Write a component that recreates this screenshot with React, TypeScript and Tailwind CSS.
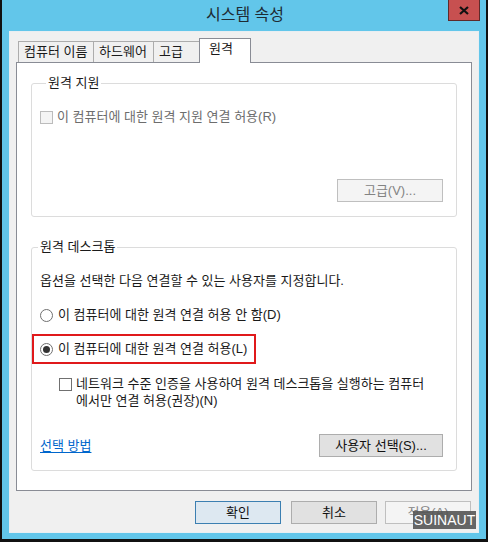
import React from 'react';

const font = "font-['Liberation_Sans','Noto_Sans_CJK_KR',sans-serif]";

function CheckBox({ disabled }: { disabled?: boolean }) {
  return (
    <span
      className={`inline-block w-[13px] h-[13px] shrink-0 border ${
        disabled ? 'border-[#bcbcbc] bg-[#f4f4f4]' : 'border-[#707070] bg-white'
      }`}
    />
  );
}

function Radio({ checked }: { checked?: boolean }) {
  return (
    <span className="inline-flex items-center justify-center w-[13px] h-[13px] shrink-0 rounded-full border border-[#707070] bg-white">
      {checked && <span className="w-[7px] h-[7px] rounded-full bg-[#333]" />}
    </span>
  );
}

function Btn({
  children,
  variant = 'normal',
  className = '',
}: {
  children: React.ReactNode;
  variant?: 'normal' | 'default' | 'disabled';
  className?: string;
}) {
  const look =
    variant === 'default'
      ? 'border-[#3c7fb1] bg-[#dde8f1] text-[#111]'
      : variant === 'disabled'
        ? 'border-[#bfbfbf] bg-[#f4f4f4] text-[#838383]'
        : 'border-[#adadad] bg-[#e1e1e1] text-[#111]';
  return (
    <div className={`h-[23px] flex items-center justify-center border text-[13px] ${look} ${className}`}>
      {children}
    </div>
  );
}

function Tab({ label, active, w }: { label: string; active?: boolean; w: string }) {
  if (active) {
    return (
      <div className={`${w} h-[25px] -mb-[1px] relative z-10 border border-b-0 border-[#898c95] bg-white pl-[9px] pt-[2px] text-[13px] leading-[16px]`}>
        {label}
      </div>
    );
  }
  return (
    <div className={`${w} h-[21px] mt-[3px] border border-b-0 border-[#acacac] bg-[#f0f0f0] -mr-[1px] pl-[5px] pt-[2px] text-[13px] leading-[16px]`}>
      {label}
    </div>
  );
}

export default function App() {
  return (
    <div className={`w-[488px] h-[542px] bg-[#62c6ea] border-l-2 border-r-2 border-b-[3px] border-[#111] flex flex-col text-[#1a1a1a] ${font}`}>
      {/* title bar */}
      <div className="h-[31px] relative flex items-center justify-center">
        <span className="text-[16px] leading-[20px] text-[#1e2b33] -mt-[2px] ml-[2px]">시스템 속성</span>
        <div className="absolute right-[6px] top-0 w-[32px] h-[21px] bg-[#c75050] border border-t-0 border-[#5e2a2a] flex items-center justify-center">
          <svg width="10" height="9" viewBox="0 0 10 9">
            <path d="M1 1 L9 8 M9 1 L1 8" stroke="#111" strokeWidth="2.2" />
          </svg>
        </div>
      </div>

      {/* client area */}
      <div className="mx-[7px] h-[502px] bg-[#f0f0f0] border border-[#e8eef2] relative flex flex-col px-[6px]">
        {/* tabs */}
        <div className="flex items-start pl-[2px] mt-[6px] h-[24px]">
          <Tab label="컴퓨터 이름" w="w-[76px]" />
          <Tab label="하드웨어" w="w-[61px]" />
          <Tab label="고급" w="w-[47px]" />
          <Tab label="원격" w="w-[52px]" active />
        </div>

        {/* tab panel */}
        <div className="h-[429px] border border-[#898c95] bg-white px-[14px] pt-[12px]">
          <fieldset className="border border-[#dcdcdc] rounded-[3px] px-[8px] pb-[14px]">
            <legend className="ml-[6px] px-[2px] text-[13px] leading-[16px]">원격 지원</legend>
            <div className="flex items-center h-[16px] mt-[18px] gap-[4px]">
              <CheckBox disabled />
              <span className="text-[13px] leading-[16px] text-[#6d6d6d]">이 컴퓨터에 대한 원격 지원 연결 허용(R)</span>
            </div>
            <div className="flex justify-end mt-[54px] pr-[5px]">
              <Btn variant="disabled" className="w-[106px] border-[#adadad] text-[#6d6d6d]">
                고급(V)...
              </Btn>
            </div>
          </fieldset>

          <fieldset className="mt-[22px] border border-[#dcdcdc] rounded-[3px] pb-[13px]">
            <legend className="ml-[6px] px-[2px] text-[13px] leading-[16px]">원격 데스크톱</legend>
            <div className="mt-[18px] pl-[8px] text-[13px] leading-[16px]">
              옵션을 선택한 다음 연결할 수 있는 사용자를 지정합니다.
            </div>
            <div className="mt-[18px] pl-[8px] flex items-center h-[16px] gap-[5px]">
              <Radio />
              <span className="text-[13px] leading-[16px]">이 컴퓨터에 대한 원격 연결 허용 안 함(D)</span>
            </div>
            <div className="mt-[11px] w-[224px] h-[30px] border-2 border-[#e0191b] flex items-center pl-[6px] gap-[5px]">
              <Radio checked />
              <span className="text-[13px] leading-[16px]">이 컴퓨터에 대한 원격 연결 허용(L)</span>
            </div>
            <div className="mt-[11px] pl-[27px] flex items-start gap-[4px]">
              <span className="mt-[3px] flex">
                <CheckBox />
              </span>
              <span className="text-[13px] leading-[17px]">
                네트워크 수준 인증을 사용하여 원격 데스크톱을 실행하는 컴퓨터
                <br />
                에서만 연결 허용(권장)(N)
              </span>
            </div>
            <div className="mt-[25px] pl-[8px] pr-[13px] flex items-center justify-between">
              <span className="text-[13px] leading-[16px] text-[#0066cc] underline underline-offset-2">선택 방법</span>
              <Btn className="w-[124px]">사용자 선택(S)...</Btn>
            </div>
          </fieldset>
        </div>

        {/* dialog buttons */}
        <div className="mt-[10px] flex justify-end pr-[1px]">
          <Btn variant="default" className="w-[86px] mr-[10px]">확인</Btn>
          <Btn className="w-[86px] mr-[8px]">취소</Btn>
          <Btn variant="disabled" className="w-[86px]">적용(A)</Btn>
        </div>

        {/* watermark */}
        <div className="absolute left-[403px] top-[479px] w-[63px] h-[18px] bg-[#555]/90 text-white text-[14px] leading-[18px] flex items-center justify-center font-['Liberation_Sans',sans-serif]">
          SUINAUT
        </div>
      </div>
    </div>
  );
}
